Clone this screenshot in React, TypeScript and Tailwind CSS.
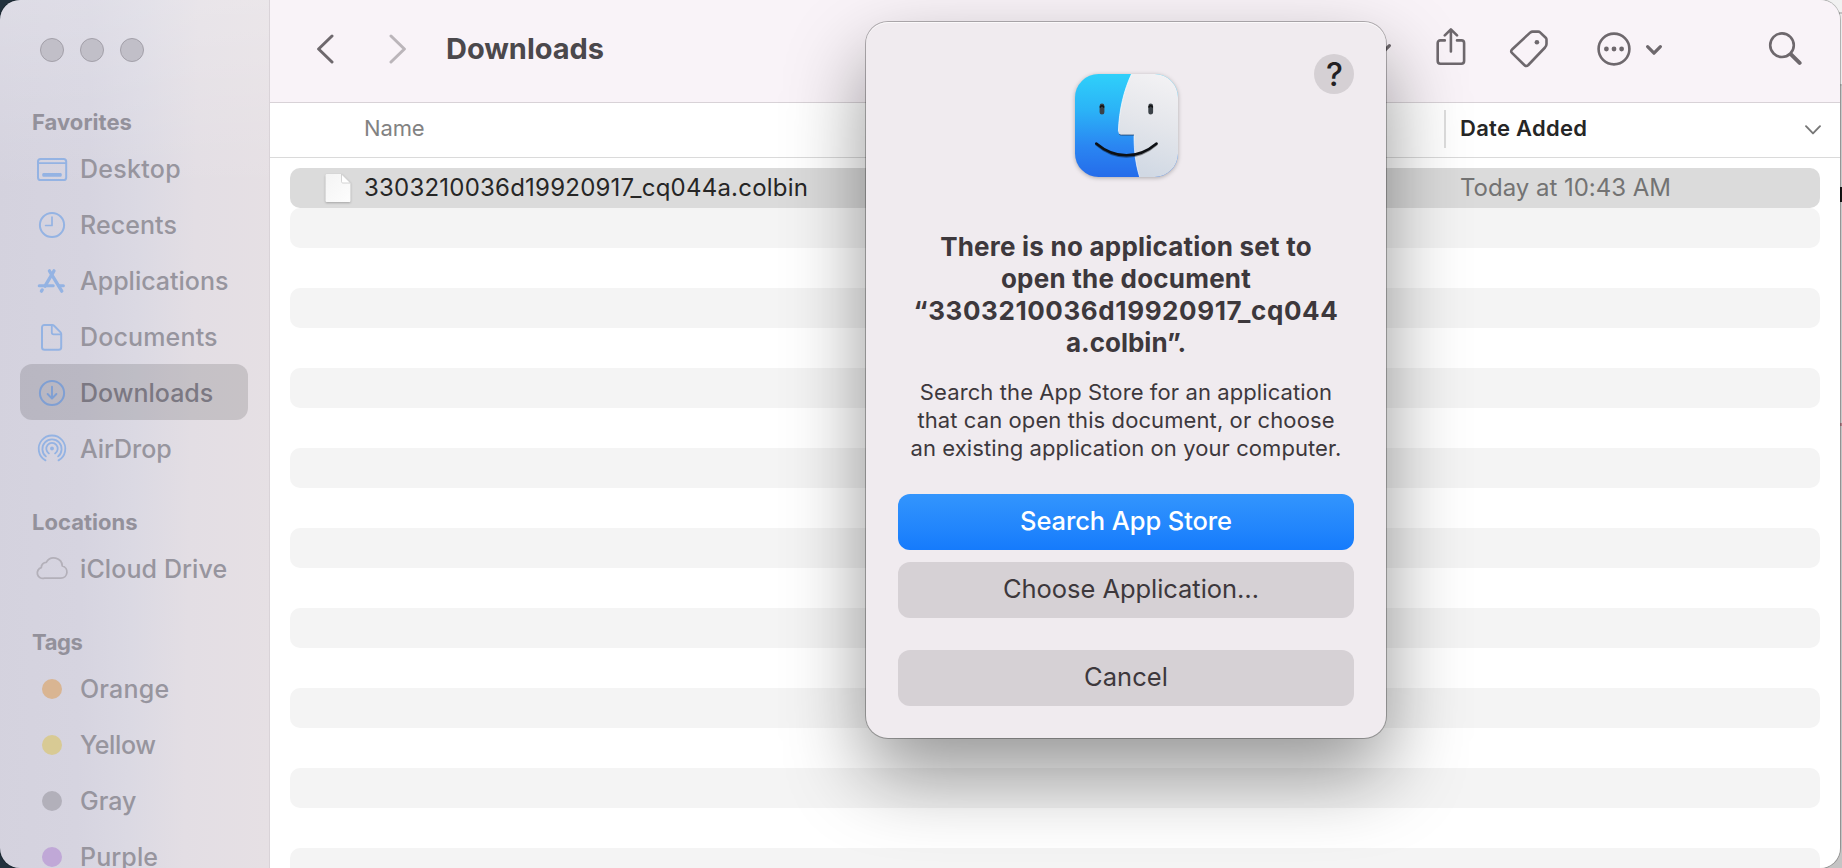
import type { ReactNode } from "react";

function Glyph({ children, className = "text-[#94b3e3]" }: { children: ReactNode; className?: string }) {
  return (
    <svg
      viewBox="0 0 32 32"
      className={`h-8 w-8 shrink-0 overflow-visible ${className}`}
      fill="none"
      stroke="currentColor"
      strokeWidth="2"
      strokeLinecap="round"
      strokeLinejoin="round"
    >
      {children}
    </svg>
  );
}

const DesktopIcon = () => (
  <Glyph>
    <rect x="2" y="7" width="28.2" height="21" rx="2.6" />
    <path d="M2 11.2h28" strokeWidth="1.7" />
    <rect x="6.3" y="21" width="19.4" height="3.8" rx="1.2" fill="currentColor" stroke="none" />
  </Glyph>
);
const RecentsIcon = () => (
  <Glyph>
    <circle cx="16" cy="17" r="12.1" />
    <path d="M16 9v8.5H9.6" strokeWidth="1.7" />
  </Glyph>
);
const ApplicationsIcon = () => (
  <Glyph>
    <g strokeWidth="3.3">
      <path d="M18 6.8 9 22.2" />
      <path d="M13.4 6.8 25.8 27.2" />
      <path d="M3.2 21.7h14" strokeWidth="3" />
      <path d="M22.8 21.7h4.6" strokeWidth="3" />
      <path d="m5.4 27.2.8-1.3" />
    </g>
  </Glyph>
);
const DocumentsIcon = () => (
  <Glyph>
    <path d="M8.6 5h7.6c.8 0 1.3.2 1.9.8l6.3 6.3c.6.6.8 1.1.8 1.9v13.2c0 1.8-.8 2.6-2.6 2.6H8.6c-1.8 0-2.6-.8-2.6-2.6V7.6C6 5.8 6.8 5 8.6 5Z" />
    <path d="M15.8 5.2v7.3c0 1.3.6 1.9 1.9 1.9h7.3" strokeWidth="1.8" />
  </Glyph>
);
const DownloadsIcon = () => (
  <Glyph className="text-[#7f9fd3]">
    <circle cx="16" cy="17" r="12.1" />
    <path d="M16 10.8v11.4M11.6 18l4.4 4.5 4.4-4.5" strokeWidth="1.9" />
  </Glyph>
);
const AirDropIcon = () => (
  <Glyph>
    <g strokeWidth="1.8">
      <circle cx="16" cy="16.5" r="1.9" fill="currentColor" stroke="none" />
      <path d="M12.9 21.4a5.7 5.7 0 1 1 6.2 0" />
      <path d="M9.9 24.4a9.6 9.6 0 1 1 12.2 0" />
      <path d="M9.5 28.4a13.3 13.3 0 1 1 13 0" />
    </g>
  </Glyph>
);
const CloudIcon = () => (
  <Glyph className="text-[#b3b0b9]">
    <path
      strokeWidth="1.8"
      d="M8.3 26.2h16.500a6.200 6.200 0 0 0 1.500-12.200A8.500 8.500 0 0 0 10.300 10.400a5 5 0 0 0-5 5.200 5.500 5.500 0 0 0 3 10.600Z"
    />
  </Glyph>
);

function Dot({ color }: { color: string }) {
  return (
    <span className="flex h-8 w-8 shrink-0 items-center justify-center pt-[2px] pr-px">
      <span className={`h-5 w-5 rounded-full ${color}`} />
    </span>
  );
}

type Entry = { label: string; icon: ReactNode; tracking: string; active?: boolean };

const groups: { title: string; tracking: string; entries: Entry[] }[] = [
  {
    title: "Favorites",
    tracking: "tracking-[0.04px]",
    entries: [
      { label: "Desktop", icon: <DesktopIcon />, tracking: "tracking-[0.28px]" },
      { label: "Recents", icon: <RecentsIcon />, tracking: "tracking-[0.08px]" },
      { label: "Applications", icon: <ApplicationsIcon />, tracking: "tracking-[-0.01px]" },
      { label: "Documents", icon: <DocumentsIcon />, tracking: "tracking-[0.16px]" },
      { label: "Downloads", icon: <DownloadsIcon />, tracking: "tracking-[0px]", active: true },
      { label: "AirDrop", icon: <AirDropIcon />, tracking: "tracking-[-0.05px]" },
    ],
  },
  {
    title: "Locations",
    tracking: "tracking-[0.03px]",
    entries: [{ label: "iCloud Drive", icon: <CloudIcon />, tracking: "tracking-[0.1px]" }],
  },
  {
    title: "Tags",
    tracking: "tracking-[-0.4px]",
    entries: [
      { label: "Orange", icon: <Dot color="bg-[#d9b592]" />, tracking: "tracking-[0.2px]" },
      { label: "Yellow", icon: <Dot color="bg-[#d8ca94]" />, tracking: "tracking-[-0.4px]" },
      { label: "Gray", icon: <Dot color="bg-[#b2b0ba]" />, tracking: "tracking-[0px]" },
      { label: "Purple", icon: <Dot color="bg-[#c0a8d7]" />, tracking: "tracking-[0.1px]" },
    ],
  },
];

function Sidebar() {
  return (
    <aside className="flex w-[270px] shrink-0 flex-col border-r border-[#d9d3d8] bg-[linear-gradient(180deg,rgba(255,255,255,0.22)_0%,rgba(255,255,255,0)_22%),linear-gradient(91deg,#d4d2de_0%,#d6d4e0_32%,#dbd9e3_50%,#e3dee4_70%,#e6e0e4_100%)]">
      <div className="flex h-[104px] shrink-0 gap-4 pt-[38px] pl-10">
        {[0, 1, 2].map((n) => (
          <span key={n} className="h-6 w-6 rounded-full border border-[#a3a0a9] bg-[#c1bfc8]" />
        ))}
      </div>
      {groups.map((group, index) => (
        <section key={group.title} className={index > 0 ? "mt-7" : ""}>
          <h2 className={`flex h-9 items-center pl-8 text-[22px] font-bold text-[#93919b] ${group.tracking}`}>
            {group.title}
          </h2>
          {group.entries.map((entry) => (
            <div
              key={entry.label}
              className={`mx-5 flex h-14 items-center gap-3 rounded-xl pl-4 text-[25px] font-medium ${
                entry.active ? "mr-[21px] bg-black/13 text-[#7b7882]" : "text-[#97959e]"
              }`}
            >
              {entry.icon}
              <span className={`pt-[3px] whitespace-nowrap ${entry.tracking}`}>{entry.label}</span>
            </div>
          ))}
        </section>
      ))}
    </aside>
  );
}

function SmallChevron() {
  return (
    <svg viewBox="0 0 16 10" className="h-[10px] w-4 overflow-visible" fill="none" stroke="#6e686d" strokeWidth="3.2" strokeLinecap="round" strokeLinejoin="round">
      <path d="m1.6 1.6 6.400 6.600 6.400-6.600" />
    </svg>
  );
}

function Toolbar() {
  return (
    <header className="flex h-[103px] shrink-0 items-center border-b border-[#d8d2d7] bg-[#f9f3f8] pb-1 pl-[46px] text-[#6e686d]">
      <svg viewBox="0 0 18 30" className="h-[30px] w-[18px]" fill="none" stroke="currentColor" strokeWidth="3" strokeLinecap="round" strokeLinejoin="round">
        <path d="M16 2 2.600 15 16 28" />
      </svg>
      <svg viewBox="0 0 18 30" className="ml-[55px] h-[30px] w-[18px]" fill="none" stroke="#bbb5ba" strokeWidth="3" strokeLinecap="round" strokeLinejoin="round">
        <path d="m2 2 13.400 13L2 28" />
      </svg>
      <h1 className="ml-[39px] text-[29px] font-bold tracking-[-0.04px] text-[#4b484c]">Downloads</h1>
      <div className="ml-auto flex items-center">
        <div className="mr-11">
          <SmallChevron />
        </div>
        <svg viewBox="0 0 32 40" className="mb-[3px] h-10 w-8" fill="none" stroke="currentColor" strokeWidth="2.600" strokeLinecap="round" strokeLinejoin="round">
          <path d="M9.800 12.400H5.400c-1.700 0-2.700 1-2.700 2.700V33c0 1.700 1 2.700 2.700 2.700h21c1.700 0 2.700-1 2.700-2.700V15.100c0-1.700-1-2.700-2.700-2.700h-4.400" />
          <path d="M15.900 23.500V2M9.800 7.400l6.100-6 6.100 6" />
        </svg>
        <svg viewBox="0 0 40 40" className="mb-px ml-[42px] h-10 w-10" fill="none" stroke="currentColor" strokeWidth="2.600" strokeLinecap="round" strokeLinejoin="round">
          <path d="M21.400 3.400 3.300 20.200c-1.500 1.400-1.500 2.600-.1 4L15.300 36c1.400 1.400 2.600 1.400 4 0L36 18.500c1-1.100 1.500-2 1.500-3.500V10.600c0-.8-.2-1.300-.8-1.900L31.100 3.400c-.6-.6-1.100-.8-1.900-.8H23.600c-.9 0-1.500.2-2.200.8Z" />
          <circle cx="27.900" cy="13.200" r="2.300" fill="currentColor" stroke="none" />
        </svg>
        <svg viewBox="0 0 34 34" className="ml-12 h-[34px] w-[34px]" fill="none" stroke="currentColor" strokeWidth="2.600">
          <circle cx="17" cy="17" r="15.400" />
          <g fill="currentColor" stroke="none">
            <circle cx="9.400" cy="17" r="2.400" />
            <circle cx="17" cy="17" r="2.400" />
            <circle cx="24.600" cy="17" r="2.400" />
          </g>
        </svg>
        <div className="ml-[15px] pt-[2px]">
          <SmallChevron />
        </div>
        <svg viewBox="0 0 34 34" className="mr-[38px] ml-[106px] h-[34px] w-[34px]" fill="none" stroke="currentColor" strokeLinecap="round">
          <circle cx="14" cy="13.200" r="11.800" strokeWidth="2.600" />
          <path d="m23 22.400 8.600 8.500" strokeWidth="4" />
        </svg>
      </div>
    </header>
  );
}

function FileIcon() {
  return (
    <svg viewBox="0 0 26 30" className="h-[30px] w-[26px] drop-shadow-[0_1px_1px_rgba(0,0,0,0.25)]">
      <defs>
        <linearGradient id="sheet" x1="0" y1="0" x2="1" y2="1">
          <stop offset="0" stopColor="#f4f4f4" />
          <stop offset="1" stopColor="#fdfdfd" />
        </linearGradient>
      </defs>
      <path d="M2 1h14.500l9 9v17.500c0 1-.5 1.500-1.500 1.500H2c-1 0-1.500-.5-1.500-1.500v-25C.5 1.500 1 1 2 1Z" fill="url(#sheet)" />
      <path d="M16.500 1v7.500c0 1 .5 1.500 1.500 1.500h7.500Z" fill="#fff" stroke="#c9c9c9" strokeWidth="0.800" />
    </svg>
  );
}

function FileList() {
  return (
    <main className="flex min-h-0 flex-1 flex-col bg-white">
      <div className="flex h-[55px] shrink-0 items-center border-b border-[#dadada] pb-[3px] text-[22px]">
        <span className="w-[1174px] pl-[94px] tracking-[-0.15px] text-[#828282]">Name</span>
        <span className="h-[38px] w-[2px] bg-[#dedede]" />
        <span className="ml-[14px] font-semibold tracking-[0.28px] text-[#262626]">Date Added</span>
        <svg viewBox="0 0 16 10" className="mt-[3px] mr-[19px] ml-auto h-[10px] w-4" fill="none" stroke="#777" strokeWidth="1.900" strokeLinecap="round" strokeLinejoin="round">
          <path d="m1 1.200 7 7.200 7-7.200" />
        </svg>
      </div>
      <div className="min-h-0 flex-1 overflow-hidden pt-[10px] pr-5 pl-5 text-[24px]">
        <div className="flex h-10 items-center rounded-[10px] bg-[#dbdbdb]">
          <div className="flex w-[1170px] items-center gap-[13px] pl-[35px]">
            <FileIcon />
            <span className="tracking-[0.22px] text-[#262626]">3303210036d19920917_cq044a.colbin</span>
          </div>
          <span className="tracking-[-0.02px] text-[#737373]">Today at 10:43 AM</span>
        </div>
        {Array.from({ length: 17 }, (_, n) => (
          <div key={n} className={`h-10 rounded-[10px] ${n % 2 === 0 ? "bg-[#f4f4f4]" : ""}`} />
        ))}
      </div>
    </main>
  );
}

function FinderIcon() {
  return (
    <svg viewBox="0 0 103 103" className="h-[103px] w-[103px] overflow-visible drop-shadow-[0_1px_2px_rgba(0,0,0,0.28)]">
      <defs>
        <linearGradient id="blue" x1="0" y1="0" x2="0" y2="1">
          <stop offset="0" stopColor="#2fd0fa" />
          <stop offset="0.35" stopColor="#2bb3f7" />
          <stop offset="0.7" stopColor="#2a86f2" />
          <stop offset="1" stopColor="#256cea" />
        </linearGradient>
        <linearGradient id="pale" x1="0.8" y1="0" x2="0.6" y2="1">
          <stop offset="0" stopColor="#f3f2f4" />
          <stop offset="0.5" stopColor="#e4e6eb" />
          <stop offset="1" stopColor="#d1d9e4" />
        </linearGradient>
        <clipPath id="tile">
          <rect width="103" height="103" rx="23.500" />
        </clipPath>
      </defs>
      <g clipPath="url(#tile)">
        <rect width="103" height="103" fill="url(#blue)" />
        <path
          d="M56.500 0C49 16 44 36 43.400 57.500c0 2.300.9 3.400 3 3.400H59C59 77 60.600 90 64.600 103H103V0Z"
          fill="url(#pale)"
        />
        <path d="M56.500 0C49 16 44 36 43.400 57.500" fill="none" stroke="#fff" strokeOpacity="0.8" strokeWidth="0.900" />
        <path d="M44.200 60.200c.6.700 1.300.9 2.200.9H59" fill="none" stroke="#274b78" strokeWidth="0.900" />
        <path d="M59 61.500C59 77 60.600 90 64.600 103" fill="none" stroke="#fff" strokeOpacity="0.700" strokeWidth="0.900" />
      </g>
      <g fill="none" strokeLinecap="round">
        <path d="M27 32v6.200M75.700 32v6.200" stroke="#3b4248" strokeWidth="4.800" />
        <path d="M25.300 33a1.800 1.800 0 0 1 3.400 0M74 33a1.800 1.800 0 0 1 3.400 0" stroke="#111" strokeWidth="1.500" />
        <path d="M21.500 70.500C40 86.500 63 86.500 81.300 70.500" stroke="#000" strokeOpacity="0.400" strokeWidth="2.700" />
        <path d="M21.200 69.500C40 85.300 63 85.300 81.600 69.500" stroke="#0d1014" strokeWidth="2.500" />
      </g>
    </svg>
  );
}

function Dialog() {
  return (
    <div
      role="dialog"
      className="absolute top-[22px] left-[866px] flex h-[716px] w-[520px] flex-col items-center rounded-[22px] bg-[#f0ebef] px-8 pt-[52px] text-[#3d383c] shadow-[inset_0_1px_0_rgba(255,255,255,0.7),0_0_0_1px_rgba(0,0,0,0.28),0_36px_80px_rgba(0,0,0,0.42)]"
    >
      <button className="absolute top-8 right-8 flex h-10 w-10 items-center justify-center rounded-full bg-[#d5d0d4] pt-px pl-px text-[32px] leading-none font-medium text-[#231f22]">
        ?
      </button>
      <FinderIcon />
      <h2 className="mt-[54px] flex flex-col text-center text-[26px] leading-8 font-bold tracking-[0.22px] whitespace-nowrap">
        <span>There is no application set to</span>
        <span>open the document</span>
        <span className="tracking-[0.6px]">“3303210036d19920917_cq044</span>
        <span className="tracking-[0px]">a.colbin”.</span>
      </h2>
      <p className="mt-[19px] flex flex-col text-center text-[22px] leading-7 tracking-[0.1px] whitespace-nowrap">
        <span>Search the App Store for an application</span>
        <span>that can open this document, or choose</span>
        <span className="tracking-[0.08px]">an existing application on your computer.</span>
      </p>
      <div className="mt-8 flex w-[456px] flex-col text-[25.5px]">
        <button className="h-14 rounded-xl bg-linear-to-b from-[#3395fd] to-[#157bfc] pb-[2px] font-medium tracking-[-0.1px] text-white">
          Search App Store
        </button>
        <button className="mt-3 h-14 rounded-xl bg-[#d6d1d5] pb-[2px] pl-[10px] tracking-[-0.05px]">Choose Application…</button>
        <button className="mt-8 h-14 rounded-xl bg-[#d6d1d5] pb-[2px] tracking-[0.05px]">Cancel</button>
      </div>
    </div>
  );
}

export default function App() {
  return (
    <div className="relative flex h-[868px] w-[1842px] overflow-hidden bg-[linear-gradient(90deg,#22313d_0_900px,transparent_900px),linear-gradient(180deg,#f1f1f1_0_12px,#c4c4c4_12px_14px,#ececec_14px_84px,#bcbcbc_84px_86px,#c9c9c9_86px_187px,#151515_187px_202px,#c9c9c9_202px_423px,#b08088_423px_426px,#c4c4c4_426px)] font-['Inter',sans-serif]">
      <div className="flex h-full w-[1840px] overflow-hidden rounded-[20px] shadow-[0_0_0_1px_rgba(0,0,0,0.25)]">
        <Sidebar />
        <div className="flex min-w-0 flex-1 flex-col">
          <Toolbar />
          <FileList />
        </div>
      </div>
      <Dialog />
    </div>
  );
}
